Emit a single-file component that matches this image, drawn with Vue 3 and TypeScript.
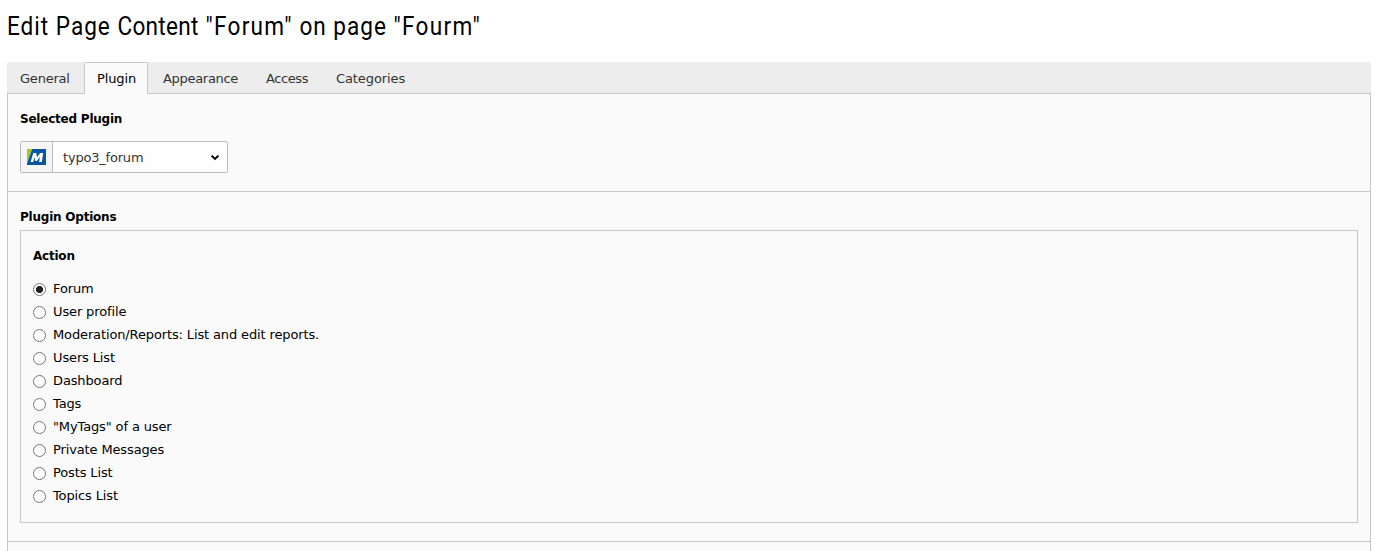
<script setup lang="ts">
import { ref } from 'vue'

interface Tab {
  label: string
  width: number
  spacing: number
}

const tabs: Tab[] = [
  { label: 'General', width: 75, spacing: -0.22 },
  { label: 'Plugin', width: 64, spacing: -0.12 },
  { label: 'Appearance', width: 101, spacing: -0.3 },
  { label: 'Access', width: 68, spacing: -0.4 },
  { label: 'Categories', width: 95, spacing: -0.1 },
]
const activeTab = ref('Plugin')

const actions: string[] = [
  'Forum',
  'User profile',
  'Moderation/Reports: List and edit reports.',
  'Users List',
  'Dashboard',
  'Tags',
  '"MyTags" of a user',
  'Private Messages',
  'Posts List',
  'Topics List',
]
const selected = ref('Forum')
</script>

<template>
  <main class="module">
    <h1 class="title"><span class="title-text">Edit Page <span class="tight">Content</span> <span class="loose">"Forum"</span> on page <span class="loose">"Fourm"</span></span></h1>
    <nav class="tabs">
      <button
        v-for="tab in tabs"
        :key="tab.label"
        class="tab"
        :class="{ active: tab.label === activeTab }"
        :style="{ width: tab.width + 'px', letterSpacing: tab.spacing + 'px' }"
        @click="activeTab = tab.label"
      >{{ tab.label }}</button>
    </nav>
    <div class="panel">
      <section class="section plugin-section">
        <h2 class="heading">Selected Plugin</h2>
        <div class="select">
          <span class="addon">
            <svg width="19" height="16" viewBox="0 0 19 16">
              <rect width="19" height="16" fill="#0855a4" />
              <path d="M0 0H4.6L0 14Z" fill="#a5c714" />
              <path d="M4.6 0L0 14V15L5.1 0Z" fill="#c5dbe0" />
              <path d="M3.6 13L6.3 4H9.2L10 8.2L13.2 4H16.2L14.8 13H12.1L12.9 8L9.9 12H8.3L7.6 8L6.2 13Z" fill="#fff" />
            </svg>
          </span>
          <span class="value">typo3_forum</span>
          <svg class="chevron" width="10" height="7" viewBox="0 0 10 7">
            <path d="M1.6 1.6L5 4.9L8.4 1.6" fill="none" stroke="#000" stroke-width="2" />
          </svg>
        </div>
      </section>
      <section class="section options-section">
        <h2 class="heading">Plugin Options</h2>
        <div class="box">
          <h3 class="heading">Action</h3>
          <div class="radios">
            <label v-for="action in actions" :key="action" class="option">
              <input v-model="selected" class="radio" type="radio" name="action" :value="action" />
              <span>{{ action }}</span>
            </label>
          </div>
        </div>
      </section>
    </div>
  </main>
</template>

<style>
body {
  background: #fff;
  overflow: hidden;
}
</style>

<style scoped>
.module {
  box-sizing: border-box;
  width: 1382px;
  height: 551px;
  padding: 0 11px 0 7px;
  overflow: hidden;
  display: flex;
  flex-direction: column;
  font: 13px/18px Verdana, "DejaVu Sans", sans-serif;
  color: #000;
}
.title {
  flex: none;
  height: 62px;
  margin: 0;
  padding-top: 10px;
  box-sizing: border-box;
  font: 400 26px/32px Roboto, sans-serif;
  white-space: nowrap;
}
.title-text {
  display: inline-block;
  letter-spacing: 1.15px;
  transform: scaleX(0.868);
  transform-origin: 0 50%;
}
.tight {
  letter-spacing: 0.35px;
}
.loose {
  letter-spacing: 1.5px;
}
.tabs {
  flex: none;
  display: flex;
  gap: 2px;
  height: 32px;
  box-sizing: border-box;
  background: #ededed;
  border-bottom: 1px solid #c8c8c8;
  border-radius: 2px 2px 0 0;
}
.tab {
  height: 32px;
  padding: 0 0 0 12px;
  box-sizing: border-box;
  border: 1px solid transparent;
  border-bottom: 0;
  border-radius: 2px 2px 0 0;
  background: none;
  font: inherit;
  color: #333;
  text-align: left;
  white-space: nowrap;
}
.tab.active {
  background: #fafafa;
  border-color: #c8c8c8;
  color: #000;
}
.panel {
  flex: 1;
  border: 1px solid #c8c8c8;
  border-width: 0 1px;
  background: #fafafa;
}
.section {
  box-sizing: border-box;
  padding: 16px 12px 0;
  border-bottom: 1px solid #c8c8c8;
}
.plugin-section {
  height: 98px;
}
.options-section {
  height: 350px;
}
.heading {
  margin: 0;
  font: 700 12px/18px Verdana, "DejaVu Sans", sans-serif;
  letter-spacing: -0.22px;
}
.select {
  display: flex;
  align-items: center;
  box-sizing: border-box;
  width: 208px;
  height: 32px;
  margin-top: 13px;
  padding-right: 7px;
  border: 1px solid #bbb;
  border-radius: 2px;
  background: #fefefe;
  color: #333;
}
.addon {
  display: flex;
  align-items: center;
  box-sizing: border-box;
  width: 32px;
  height: 30px;
  padding-left: 6px;
  border-right: 1px solid #bbb;
  background: #f5f5f5;
}
.value {
  flex: 1;
  padding: 2px 0 0 10px;
  letter-spacing: -0.2px;
}
.box {
  box-sizing: border-box;
  height: 293px;
  margin-top: 4px;
  padding: 16px 12px 0;
  border: 1px solid #c8c8c8;
}
.radios {
  margin-top: 12px;
}
.option {
  display: flex;
  align-items: center;
  height: 23px;
  letter-spacing: -0.13px;
}
.radio {
  appearance: none;
  flex: none;
  box-sizing: border-box;
  width: 13px;
  height: 13px;
  margin: 1px 7px 0 0;
  border: 1px solid #767676;
  border-radius: 50%;
  background: #fff;
}
.radio:checked {
  background: radial-gradient(circle, #222 3.2px, #fff 3.9px);
}
</style>
